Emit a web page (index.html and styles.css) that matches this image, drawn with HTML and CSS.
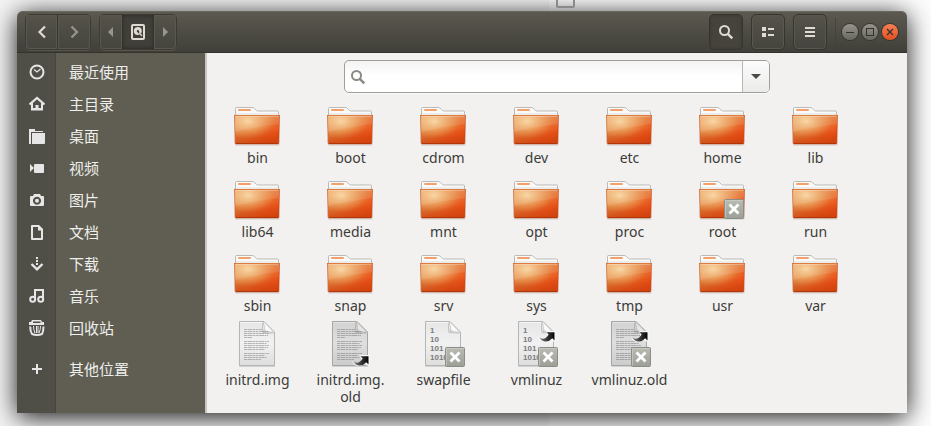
FILE: index.html
```html
<!DOCTYPE html>
<html lang="zh-CN">
<head>
<meta charset="utf-8">
<meta name="viewport" content="width=device-width, initial-scale=1">
<title>/</title>
<link rel="stylesheet" href="styles.css">
</head>
<body>
<svg class="defs" width="0" height="0" aria-hidden="true">
  <defs>
    <linearGradient id="g-front" x1="0" y1="0" x2="1" y2="1">
      <stop offset="0" stop-color="#eda766"/><stop offset=".4" stop-color="#e48541"/><stop offset=".75" stop-color="#ec5419"/><stop offset="1" stop-color="#dc4310"/>
    </linearGradient>
    <radialGradient id="g-glow" cx=".3" cy=".2" r=".6">
      <stop offset="0" stop-color="#f8d7a0" stop-opacity=".95"/><stop offset="1" stop-color="#f0a860" stop-opacity="0"/>
    </radialGradient>
    <linearGradient id="g-shade" x1="0" y1="0" x2="0" y2="1">
      <stop offset=".45" stop-color="#c8400c" stop-opacity="0"/><stop offset="1" stop-color="#c8400c" stop-opacity=".7"/>
    </linearGradient>
    <linearGradient id="g-page" x1="0" y1="0" x2="0" y2="1">
      <stop offset="0" stop-color="#e6e6e6"/><stop offset=".5" stop-color="#f1f1f1"/><stop offset="1" stop-color="#dedede"/>
    </linearGradient>
    <linearGradient id="g-curl" x1="0" y1="1" x2="1" y2="0">
      <stop offset="0" stop-color="#a8a8a8"/><stop offset=".35" stop-color="#ffffff"/><stop offset="1" stop-color="#dcdcdc"/>
    </linearGradient>
    <linearGradient id="g-emblem" x1="0" y1="0" x2="0" y2="1">
      <stop offset="0" stop-color="#b9bcb3"/><stop offset="1" stop-color="#9b9f96"/>
    </linearGradient>
    <linearGradient id="g-arrow" x1="0" y1="0" x2="1" y2="0">
      <stop offset="0" stop-color="#8a8a8a"/><stop offset=".5" stop-color="#3a3a3a"/><stop offset="1" stop-color="#050505"/>
    </linearGradient>
    <symbol id="folder" viewBox="0 0 48 48">
      <path d="M2 46.5h44.5v1H2z" fill="#000" opacity=".15"/>
      <path d="M2.500 20V10.500q0-1 1-1H19q1.500 0 2.500 1l2 2q.7.500 1.700.5H44.500q1 0 1 1V20z" fill="#fafafa" stroke="#b9b9b5"/>
      <rect x="5" y="11" width="13" height="2" rx="1" fill="#f3a06a"/>
      <path d="M3 16h42" stroke="#dededb"/>
      <path d="M1.500 17.500h45l-.7 27.500q0 1-1 1H3.300q-1 0-1-1z" fill="url(#g-front)"/>
      <path d="M1.500 17.500h45l-.7 27.500q0 1-1 1H3.300q-1 0-1-1z" fill="url(#g-shade)"/>
      <path d="M1.500 17.500h45l-.7 27.500q0 1-1 1H3.300q-1 0-1-1z" fill="url(#g-glow)"/>
      <path d="M2 18h44v8Q23 29 2 34z" fill="#fff" opacity=".1"/>
      <path d="M1 17.500h46" stroke="#dc7a40"/>
      <path d="M2.500 18.500h43" stroke="#fff" opacity=".25"/>
      <path d="M1.500 17.500l.5 27.500q0 1 1 1h42q1 0 1-1l.5-27.500" fill="none" stroke="#b43a0c" opacity=".5"/>
      <path d="M3 45.500h42" stroke="#a83208" opacity=".75"/>
    </symbol>
    <symbol id="page" viewBox="0 0 48 48">
      <path d="M6.500 1.500H31l10.500 10.500v33.500h-35z" fill="url(#g-page)" stroke="#b5b5b5"/>
      <path d="M7.500 2.500H31" stroke="#fff" opacity=".7"/>
      <path d="M6 46.500h36" stroke="#000" opacity=".12"/>
      <path d="M30 2q3 5 1 9.500 5-1 10.500 1.500L31 2z" fill="url(#g-curl)" stroke="#bdbdbd" stroke-width=".6"/>
      <path d="M30 2.500Q29 9 30 12.500q5 .5 10 .5" fill="none" stroke="#999" stroke-width=".9" opacity=".6"/>
    </symbol>
    <symbol id="text-lines" viewBox="0 0 48 48">
      <path d="M11 9.500h18M11 11.500h24M11 13.500h25M11 15.500h24M11 17.500h8M11 21.500h25M11 23.500h23M11 25.500h25M11 27.500h24M11 29.500h21M11 33.500h25M11 35.500h21M11 37.500h23M11 39.500h17" stroke="#6e6e6e" stroke-width=".9" stroke-dasharray="3 .5 5 .5 2 .5" opacity=".5"/>
    </symbol>
    <symbol id="denied" viewBox="0 0 20 20">
      <rect x=".5" y=".5" width="19" height="19" rx="1" fill="url(#g-emblem)" stroke="#8b8e86"/>
      <path d="M1.500 18.500v-17h17" fill="none" stroke="#d0d2cb" opacity=".6"/>
      <path d="M5.500 5.500l9 9M14.500 5.500l-9 9" stroke="#fff" stroke-width="2.800"/>
    </symbol>
    <symbol id="link" viewBox="0 0 18 12">
      <path d="M8 0h9.500v10.500h-3l-2-2q-3 3-7 2.500-4-.7-5.500-5 2 2.500 5 2.500 3-.2 4.500-3z" fill="#fff" opacity=".8"/>
      <path d="M8.500 1.200H16.500V9.500l-2.200-2.200Q11 11 6.800 10.500 3 10 1.500 6.500q5 3.500 9.200-3z" fill="url(#g-arrow)"/>
    </symbol>
    <symbol id="lens" viewBox="0 0 16 16">
      <circle cx="6.500" cy="6.500" r="4.500" fill="none" stroke="currentColor" stroke-width="2"/>
      <path d="M9.800 9.800l4.500 4.500" stroke="currentColor" stroke-width="2.400"/>
    </symbol>
  </defs>
</svg>
<div class="backdrop-box"></div>

<div class="window">
  <header class="titlebar">
    <div class="group">
      <button class="tb nav" aria-label="后退"><svg viewBox="0 0 16 16"><path d="M11 2.500L5.500 8l5.500 5.500" fill="none" stroke="currentColor" stroke-width="2.200"/></svg></button>
      <button class="tb nav dim" aria-label="前进"><svg viewBox="0 0 16 16"><path d="M5.500 2.500L11 8l-5.500 5.500" fill="none" stroke="currentColor" stroke-width="2.200"/></svg></button>
    </div>
    <div class="group">
      <button class="tb step dim" aria-label="向左"><svg viewBox="0 0 16 16"><path d="M10 3v10l-5-5z" fill="currentColor"/></svg></button>
      <button class="tb nav pressed" aria-label="计算机"><svg viewBox="0 0 16 16"><path d="M3 0h10q2 0 2 2v12q0 2-2 2H3q-2 0-2-2V2q0-2 2-2zm0 2v12h10V2z" fill="currentColor" fill-rule="evenodd"/><circle cx="7.800" cy="7" r="4" fill="currentColor"/><circle cx="7.800" cy="7" r="1" fill="#3a3933"/><path d="M7.500 7l5 5.500" stroke="#3a3933" stroke-width="1.800"/><path d="M9 8.500l3 3.500" stroke="currentColor" stroke-width="1.200"/></svg></button>
      <button class="tb step dim" aria-label="向右"><svg viewBox="0 0 16 16"><path d="M6 3v10l5-5z" fill="currentColor"/></svg></button>
    </div>
    <div class="tools">
      <button class="tb tool active" aria-label="搜索"><svg viewBox="0 0 16 16"><use href="#lens"/></svg></button>
      <button class="tb tool" aria-label="列表视图"><svg viewBox="0 0 16 16"><path d="M2 3h4v4H2zM2 9h4v4H2zM8 4h6v2H8zM8 10h6v2H8z" fill="currentColor"/></svg></button>
      <button class="tb tool" aria-label="菜单"><svg viewBox="0 0 16 16"><path d="M3 3h10v2H3zM3 7h10v2H3zM3 11h10v2H3z" fill="currentColor"/></svg></button>
    </div>
    <div class="controls">
      <button class="ctl" aria-label="最小化"><svg viewBox="0 0 16 16"><path d="M4 8.500h8" stroke="currentColor"/></svg></button>
      <button class="ctl" aria-label="最大化"><svg viewBox="0 0 16 16"><rect x="4.500" y="4.500" width="7" height="7" fill="none" stroke="currentColor"/></svg></button>
      <button class="ctl close" aria-label="关闭"><svg viewBox="0 0 16 16"><path d="M5 5l6 6M11 5l-6 6" stroke="currentColor" stroke-width="1.300"/></svg></button>
    </div>
  </header>

  <div class="body">
    <nav class="sidebar">
      <a class="place" href="#recent"><span class="pic"><svg viewBox="0 0 16 16"><circle cx="8" cy="8" r="6.500" fill="none" stroke="currentColor" stroke-width="2"/><path d="M5 5.500L8 8l3.500-3" fill="none" stroke="currentColor" stroke-width="1.200"/></svg></span><span class="name">最近使用</span></a>
      <a class="place" href="#home"><span class="pic"><svg viewBox="0 0 16 16"><path d="M.5 8.500L8 2l7.500 6.500" fill="none" stroke="currentColor" stroke-width="2.200"/><path d="M2 8l2-1.500V12h2.500V9h3v3H12V6.500L14 8v6.500H2z" fill="currentColor"/></svg></span><span class="name">主目录</span></a>
      <a class="place" href="#desktop"><span class="pic"><svg viewBox="0 0 16 16"><path d="M0 1h6v2h8v1H2v12H0z" fill="currentColor"/><path d="M3 5h13v10q0 1-1 1H3z" fill="currentColor"/></svg></span><span class="name">桌面</span></a>
      <a class="place" href="#videos"><span class="pic"><svg viewBox="0 0 16 16"><path d="M1 4l4 4-4 4z" fill="currentColor"/><rect x="5" y="4" width="10" height="9" rx="1" fill="currentColor"/></svg></span><span class="name">视频</span></a>
      <a class="place" href="#pictures"><span class="pic"><svg viewBox="0 0 16 16"><path d="M5 2h6l1 2h2q1 0 1 1v8q0 1-1 1H2q-1 0-1-1V5q0-1 1-1h2zM8 4.700a4 4 0 1 0 .01 0z" fill="currentColor" fill-rule="evenodd"/><circle cx="8" cy="8.700" r="2" fill="currentColor"/></svg></span><span class="name">图片</span></a>
      <a class="place" href="#documents"><span class="pic"><svg viewBox="0 0 16 16"><path d="M3 1h7l4 4v10q0 1-1 1H3q-1 0-1-1V2q0-1 1-1zm1 2v11h8V6.500H9V3z" fill="currentColor" fill-rule="evenodd"/></svg></span><span class="name">文档</span></a>
      <a class="place" href="#downloads"><span class="pic"><svg viewBox="0 0 16 16"><path d="M7 1h2v2H7zM7 4h2v2H7zM7 7h2v2H7z" fill="currentColor"/><path d="M2.500 8L8 13.300 13.500 8" fill="none" stroke="currentColor" stroke-width="2.400"/></svg></span><span class="name">下载</span></a>
      <a class="place" href="#music"><span class="pic"><svg viewBox="0 0 16 16"><path d="M6 11.500V2h8v9.500" fill="none" stroke="currentColor" stroke-width="2"/><circle cx="3.700" cy="11.300" r="2.500" fill="none" stroke="currentColor" stroke-width="2"/><circle cx="11.700" cy="11.300" r="2.500" fill="none" stroke="currentColor" stroke-width="2"/></svg></span><span class="name">音乐</span></a>
      <a class="place" href="#trash"><span class="pic"><svg viewBox="0 0 16 16"><path d="M3 0h9l1 2h2v3H0V2h2zm1 1.500V3h7.500V1.500z" fill="currentColor" fill-rule="evenodd"/><path d="M1.200 6.500q0 5 1.800 7.500 5 2 10 0 1.500-2.500 1.500-7.500" fill="none" stroke="currentColor" stroke-width="2"/><path d="M4.500 6q0 4 1.500 7M7.500 6v7M9 6v7M11.500 6q0 4-1.500 7" fill="none" stroke="currentColor"/></svg></span><span class="name">回收站</span></a>
      <a class="place other" href="#other"><span class="pic"><svg viewBox="0 0 16 16"><path d="M3 8h10M8 3v10" stroke="currentColor" stroke-width="2"/></svg></span><span class="name">其他位置</span></a>
    </nav>

    <main class="content">
      <form class="search" role="search">
        <label class="search-icon" for="q" aria-label="搜索"><svg viewBox="0 0 16 16"><use href="#lens"/></svg></label>
        <input class="query" id="q" type="text">
        <button class="more" type="button" aria-label="筛选"><svg viewBox="0 0 10 6"><path d="M0 0h10L5 5z" fill="currentColor"/></svg></button>
      </form>
      <ul class="files">
        <li class="file"><svg viewBox="0 0 48 48"><use href="#folder"/></svg><span>bin</span></li>
        <li class="file"><svg viewBox="0 0 48 48"><use href="#folder"/></svg><span>boot</span></li>
        <li class="file"><svg viewBox="0 0 48 48"><use href="#folder"/></svg><span>cdrom</span></li>
        <li class="file"><svg viewBox="0 0 48 48"><use href="#folder"/></svg><span>dev</span></li>
        <li class="file"><svg viewBox="0 0 48 48"><use href="#folder"/></svg><span>etc</span></li>
        <li class="file"><svg viewBox="0 0 48 48"><use href="#folder"/></svg><span>home</span></li>
        <li class="file"><svg viewBox="0 0 48 48"><use href="#folder"/></svg><span>lib</span></li>
        <li class="file"><svg viewBox="0 0 48 48"><use href="#folder"/></svg><span>lib64</span></li>
        <li class="file"><svg viewBox="0 0 48 48"><use href="#folder"/></svg><span>media</span></li>
        <li class="file"><svg viewBox="0 0 48 48"><use href="#folder"/></svg><span>mnt</span></li>
        <li class="file"><svg viewBox="0 0 48 48"><use href="#folder"/></svg><span>opt</span></li>
        <li class="file"><svg viewBox="0 0 48 48"><use href="#folder"/></svg><span>proc</span></li>
        <li class="file"><svg viewBox="0 0 48 48"><use href="#folder"/><use href="#denied" x="26" y="27" width="20" height="20"/></svg><span>root</span></li>
        <li class="file"><svg viewBox="0 0 48 48"><use href="#folder"/></svg><span>run</span></li>
        <li class="file"><svg viewBox="0 0 48 48"><use href="#folder"/></svg><span>sbin</span></li>
        <li class="file"><svg viewBox="0 0 48 48"><use href="#folder"/></svg><span>snap</span></li>
        <li class="file"><svg viewBox="0 0 48 48"><use href="#folder"/></svg><span>srv</span></li>
        <li class="file"><svg viewBox="0 0 48 48"><use href="#folder"/></svg><span>sys</span></li>
        <li class="file"><svg viewBox="0 0 48 48"><use href="#folder"/></svg><span>tmp</span></li>
        <li class="file"><svg viewBox="0 0 48 48"><use href="#folder"/></svg><span>usr</span></li>
        <li class="file"><svg viewBox="0 0 48 48"><use href="#folder"/></svg><span>var</span></li>
        <li class="file"><svg viewBox="0 0 48 48"><use href="#page"/><use href="#text-lines"/></svg><span>initrd.img</span></li>
        <li class="file"><svg viewBox="0 0 48 48"><use href="#page"/><path d="M6 1h25l11 11v34H6z" opacity=".08"/><use href="#text-lines"/><use href="#link" x="26" y="35" width="18" height="12"/></svg><span>initrd.img.<wbr>old</span></li>
        <li class="file"><svg viewBox="0 0 48 48"><use href="#page"/><g class="bits"><text x="11" y="13">1</text><text x="11" y="22">10</text><text x="11" y="31">101</text><text x="11" y="40">1010</text></g><use href="#denied" x="26" y="27" width="20" height="20"/></svg><span>swapfile</span></li>
        <li class="file"><svg viewBox="0 0 48 48"><use href="#page"/><g class="bits"><text x="11" y="13">1</text><text x="11" y="22">10</text><text x="11" y="31">101</text><text x="11" y="40">1010</text></g><use href="#link" x="26" y="11" width="18" height="12"/><use href="#denied" x="26" y="27" width="20" height="20"/></svg><span>vmlinuz</span></li>
        <li class="file"><svg viewBox="0 0 48 48"><use href="#page"/><path d="M6 1h25l11 11v34H6z" opacity=".08"/><use href="#text-lines"/><use href="#link" x="26" y="11" width="18" height="12"/><use href="#denied" x="26" y="27" width="20" height="20"/></svg><span>vmlinuz.old</span></li>
      </ul>
    </main>
  </div>
</div>
</body>
</html>
```
FILE: styles.css
```css
* { box-sizing: border-box; }

body {
  margin: 0;
  min-height: 100vh;
  padding: 11px 24px 13px 17px;
  display: flex;
  flex-direction: column;
  overflow: hidden;
  background: linear-gradient(90deg, #f5f5f5 59%, #fdfdfd 59%);
  font-family: "Noto Sans", "Noto Sans CJK SC", sans-serif;
  font-size: 14px;
  color: #3c3b37;
}

.defs { position: absolute; }

/* Object on the desktop that peeks out above the window */
.backdrop-box {
  position: absolute;
  top: -8px;
  left: 556px;
  width: 19px;
  height: 16px;
  border: 2px solid #8a8a8a;
  border-radius: 2px;
}

.window {
  flex: 1;
  display: flex;
  flex-direction: column;
  border-radius: 6px 6px 0 0;
  box-shadow: 0 4px 26px rgba(0, 0, 0, .92);
}

button {
  font: inherit;
  padding: 0;
  border: 0;
  background: none;
  color: inherit;
}

/* Title bar */
.titlebar {
  display: flex;
  align-items: center;
  gap: 8px;
  height: 42px;
  padding: 0 9px 0 8px;
  border-radius: 6px 6px 0 0;
  border-bottom: 1px solid #34332e;
  background: linear-gradient(#5c5a50, #403f39);
  box-shadow: inset 0 1px #6b695e;
  color: #dfdbd2;
}

.group {
  display: flex;
  border: 1px solid #3b3a34;
  border-radius: 5px;
  box-shadow: 0 1px #56544b;
}

.tb {
  display: flex;
  align-items: center;
  justify-content: center;
  height: 34px;
  background: linear-gradient(#55534a, #45443e);
  box-shadow: inset 0 0 0 1px #5a584e;
}

.tb svg { width: 16px; height: 16px; }
.tb:first-child { border-radius: 4px 0 0 4px; }
.tb:last-child { border-radius: 0 4px 4px 0; }
.nav { width: 32px; }
.step { width: 22px; }
.dim { color: #98958c; }
.group .nav:first-child { border-right: 1px solid #34332e; }

.pressed {
  background: #403f39;
  box-shadow: inset 0 0 4px #26251f;
}

.tools {
  display: flex;
  gap: 8px;
  margin-left: auto;
}

.tools .tool {
  width: 34px;
  height: 36px;
  border: 1px solid #35342f;
  border-radius: 5px;
}

.tools .active { background: #45433c; box-shadow: inset 0 0 3px #38372f; }

.controls {
  display: flex;
  gap: 4px;
  padding-left: 6px;
  border-left: 1px solid #43423b;
}

.ctl {
  width: 16px;
  height: 28px;
  display: flex;
  align-items: center;
  color: #33322d;
}

.ctl svg {
  width: 16px;
  height: 16px;
  border-radius: 50%;
  background: linear-gradient(#96948d, #686760);
  box-shadow: 0 0 0 1px #35342f;
}

.close svg { background: linear-gradient(#f58055, #e2501f); }

/* Body */
.body { flex: 1; display: flex; }

.sidebar {
  flex: none;
  width: 190px;
  padding-top: 3px;
  border-right: 2px solid #c8c6c1;
  background: linear-gradient(90deg, #504f47 38px, #46453e 38px, #46453e 39px, #605e52 39px);
}

.place {
  display: flex;
  align-items: center;
  gap: 12px;
  height: 32px;
  color: #eeeeec;
  font-size: 15px;
  text-decoration: none;
}

.pic {
  width: 40px;
  display: flex;
  justify-content: center;
  color: #e6e6e6;
}

.pic svg { width: 16px; height: 16px; }
.name { padding-bottom: 2px; }
.other { margin-top: 9px; }

.content {
  flex: 1;
  min-width: 0;
  padding-top: 7px;
  background: #f2f1f0;
}

.search {
  display: flex;
  max-width: 426px;
  height: 33px;
  margin: 0 auto 5px;
  border: 1px solid #a09e99;
  border-radius: 5px;
  background: linear-gradient(#f3f3f3, #fff 50%);
  box-shadow: 0 1px #fafafa;
  overflow: hidden;
}

.search-icon {
  display: flex;
  align-items: center;
  padding-left: 5px;
  color: #8b8983;
}

.search-icon svg { width: 16px; height: 16px; }

.query {
  flex: 1;
  min-width: 0;
  border: 0;
  outline: 0;
  background: none;
  font: inherit;
}

.more {
  width: 27px;
  display: flex;
  align-items: center;
  justify-content: center;
  border-left: 1px solid #b8b6b1;
  background: linear-gradient(#fcfcfc, #ebebea);
  color: #4a4944;
}

.more svg { width: 10px; height: 6px; }

.files {
  display: grid;
  grid-template-columns: repeat(auto-fill, 93px);
  margin: 0;
  padding: 0 0 0 4px;
  list-style: none;
}

.file {
  display: flex;
  flex-direction: column;
  align-items: center;
  gap: 3px;
  padding: 0 4px 6px;
  line-height: 17px;
  text-align: center;
}

.file > svg {
  width: 48px;
  height: 48px;
  margin-right: 1px;
}

.bits {
  font: bold 8px "Liberation Sans", sans-serif;
  fill: #7c7c7c;
}
```
